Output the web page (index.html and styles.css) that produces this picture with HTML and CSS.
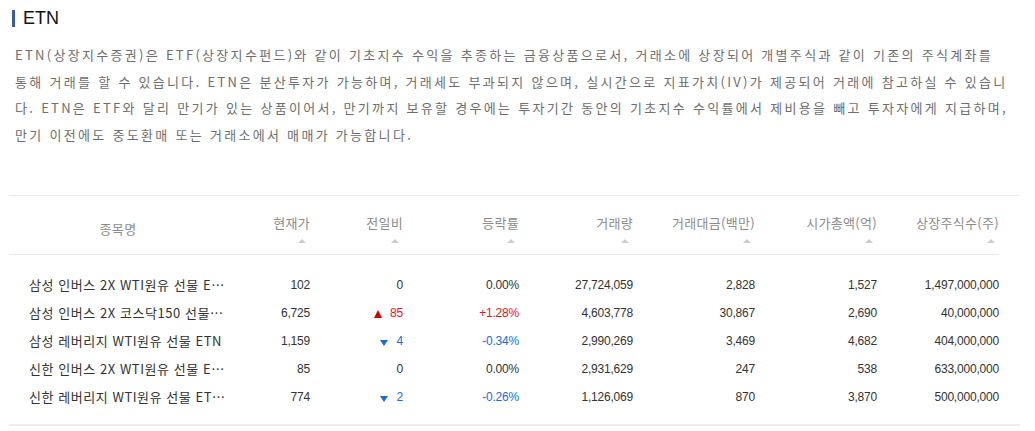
FILE: index.html
```html
<!DOCTYPE html>
<html lang="ko">
<head>
<meta charset="utf-8">
<title>ETN</title>
<link rel="stylesheet" href="styles.css">
</head>
<body>
<div class="page">
  <h2 class="title">ETN</h2>
  <p class="desc">ETN(상장지수증권)은 ETF(상장지수펀드)와 같이 기초지수 수익을 추종하는 금융상품으로서, 거래소에 상장되어 개별주식과 같이 기존의 주식계좌를<br>통해 거래를 할 수 있습니다. ETN은 분산투자가 가능하며, 거래세도 부과되지 않으며, 실시간으로 지표가치(IV)가 제공되어 거래에 참고하실 수 있습니<br>다. ETN은 ETF와 달리 만기가 있는 상품이어서, 만기까지 보유할 경우에는 투자기간 동안의 기초지수 수익률에서 제비용을 빼고 투자자에게 지급하며,<br>만기 이전에도 중도환매 또는 거래소에서 매매가 가능합니다.</p>

  <div class="table">
    <div class="row thead">
      <div class="th name">종목명</div>
      <div class="th"><span>현재가</span><i class="sort"></i></div>
      <div class="th"><span>전일비</span><i class="sort"></i></div>
      <div class="th"><span>등락률</span><i class="sort"></i></div>
      <div class="th"><span>거래량</span><i class="sort"></i></div>
      <div class="th"><span>거래대금(백만)</span><i class="sort"></i></div>
      <div class="th"><span>시가총액(억)</span><i class="sort"></i></div>
      <div class="th"><span>상장주식수(주)</span><i class="sort"></i></div>
    </div>
    <div class="tbody">
      <div class="row">
        <div class="td name">삼성 인버스 2X WTI원유 선물 ETN</div>
        <div class="td">102</div>
        <div class="td">0</div>
        <div class="td">0.00%</div>
        <div class="td">27,724,059</div>
        <div class="td">2,828</div>
        <div class="td">1,527</div>
        <div class="td">1,497,000,000</div>
      </div>
      <div class="row">
        <div class="td name">삼성 인버스 2X 코스닥150 선물 ETN</div>
        <div class="td">6,725</div>
        <div class="td up"><i class="tri-up"></i>85</div>
        <div class="td up">+1.28%</div>
        <div class="td">4,603,778</div>
        <div class="td">30,867</div>
        <div class="td">2,690</div>
        <div class="td">40,000,000</div>
      </div>
      <div class="row">
        <div class="td name">삼성 레버리지 WTI원유 선물 ETN</div>
        <div class="td">1,159</div>
        <div class="td down"><i class="tri-down"></i>4</div>
        <div class="td down">-0.34%</div>
        <div class="td">2,990,269</div>
        <div class="td">3,469</div>
        <div class="td">4,682</div>
        <div class="td">404,000,000</div>
      </div>
      <div class="row">
        <div class="td name">신한 인버스 2X WTI원유 선물 ETN(H)</div>
        <div class="td">85</div>
        <div class="td">0</div>
        <div class="td">0.00%</div>
        <div class="td">2,931,629</div>
        <div class="td">247</div>
        <div class="td">538</div>
        <div class="td">633,000,000</div>
      </div>
      <div class="row">
        <div class="td name">신한 레버리지 WTI원유 선물 ETN(H)</div>
        <div class="td">774</div>
        <div class="td down"><i class="tri-down"></i>2</div>
        <div class="td down">-0.26%</div>
        <div class="td">1,126,069</div>
        <div class="td">870</div>
        <div class="td">3,870</div>
        <div class="td">500,000,000</div>
      </div>
    </div>
  </div>
</div>
</body>
</html>
```

FILE: styles.css
```css
* { box-sizing: border-box; }

body {
  margin: 0;
  background: #fff;
  font-family: "Noto Sans CJK KR", "Noto Sans", sans-serif;
}

.page {
  padding: 10px 15px 0 9px;
}

.title {
  margin: 0 0 0 3px;
  height: 17px;
  display: flex;
  align-items: center;
  border-left: 3px solid #3b5ca8;
  padding-left: 8px;
  font: 400 18px/17px "Liberation Sans", Arial, sans-serif;
  color: #111;
}

.desc {
  margin: 15px 0 0 6px;
  font-size: 13px;
  line-height: 26.5px;
  letter-spacing: 2.3px;
  color: #6e6e6e;
  white-space: nowrap;
}

.table {
  margin-top: 47px;
  width: 1011px;
  padding-right: 21px;
  border-top: 1px solid #ececec;
  border-bottom: 2px solid #eeeeee;
}

.row {
  display: grid;
  grid-template-columns: 218px 83px 93px 116px 114px 122px 122px 122px;
}

.thead {
  border-bottom: 1px solid #e9e9e9;
  color: #8c8c8c;
  font-size: 13px;
  letter-spacing: 0.3px;
}

.th {
  padding: 20px 0 11px;
  display: flex;
  flex-direction: column;
  align-items: flex-end;
  line-height: 14px;
  white-space: nowrap;
}

.th.name {
  align-items: center;
  justify-content: center;
  padding: 7px 0 0;
}

.sort {
  display: block;
  width: 0;
  height: 0;
  border-left: 4px solid transparent;
  border-right: 4px solid transparent;
  border-bottom: 4px solid #cccccc;
  margin: 9px 4px 0 0;
}

.tbody {
  padding: 16px 0 13px;
}

.td {
  height: 28px;
  line-height: 28px;
  font-family: "Liberation Sans", Arial, sans-serif;
  font-size: 12px;
  letter-spacing: -0.2px;
  color: #333;
  text-align: right;
  white-space: nowrap;
}

.td.name {
  padding-left: 20px;
  text-align: left;
  overflow: hidden;
  text-overflow: ellipsis;
  font-family: "Noto Sans CJK KR", sans-serif;
  font-size: 13px;
  letter-spacing: 0.55px;
  color: #333;
}

.up { color: #ee1122; }
.down { color: #1a6be0; }

.tri-up {
  display: inline-block;
  width: 0;
  height: 0;
  border-left: 4.5px solid transparent;
  border-right: 4.5px solid transparent;
  border-bottom: 8px solid #d80000;
  margin-right: 8px;
  vertical-align: -1px;
}

.tri-down {
  display: inline-block;
  width: 0;
  height: 0;
  border-left: 4px solid transparent;
  border-right: 4px solid transparent;
  border-top: 6px solid #1a6be0;
  margin-right: 9px;
  vertical-align: -1px;
}
```
